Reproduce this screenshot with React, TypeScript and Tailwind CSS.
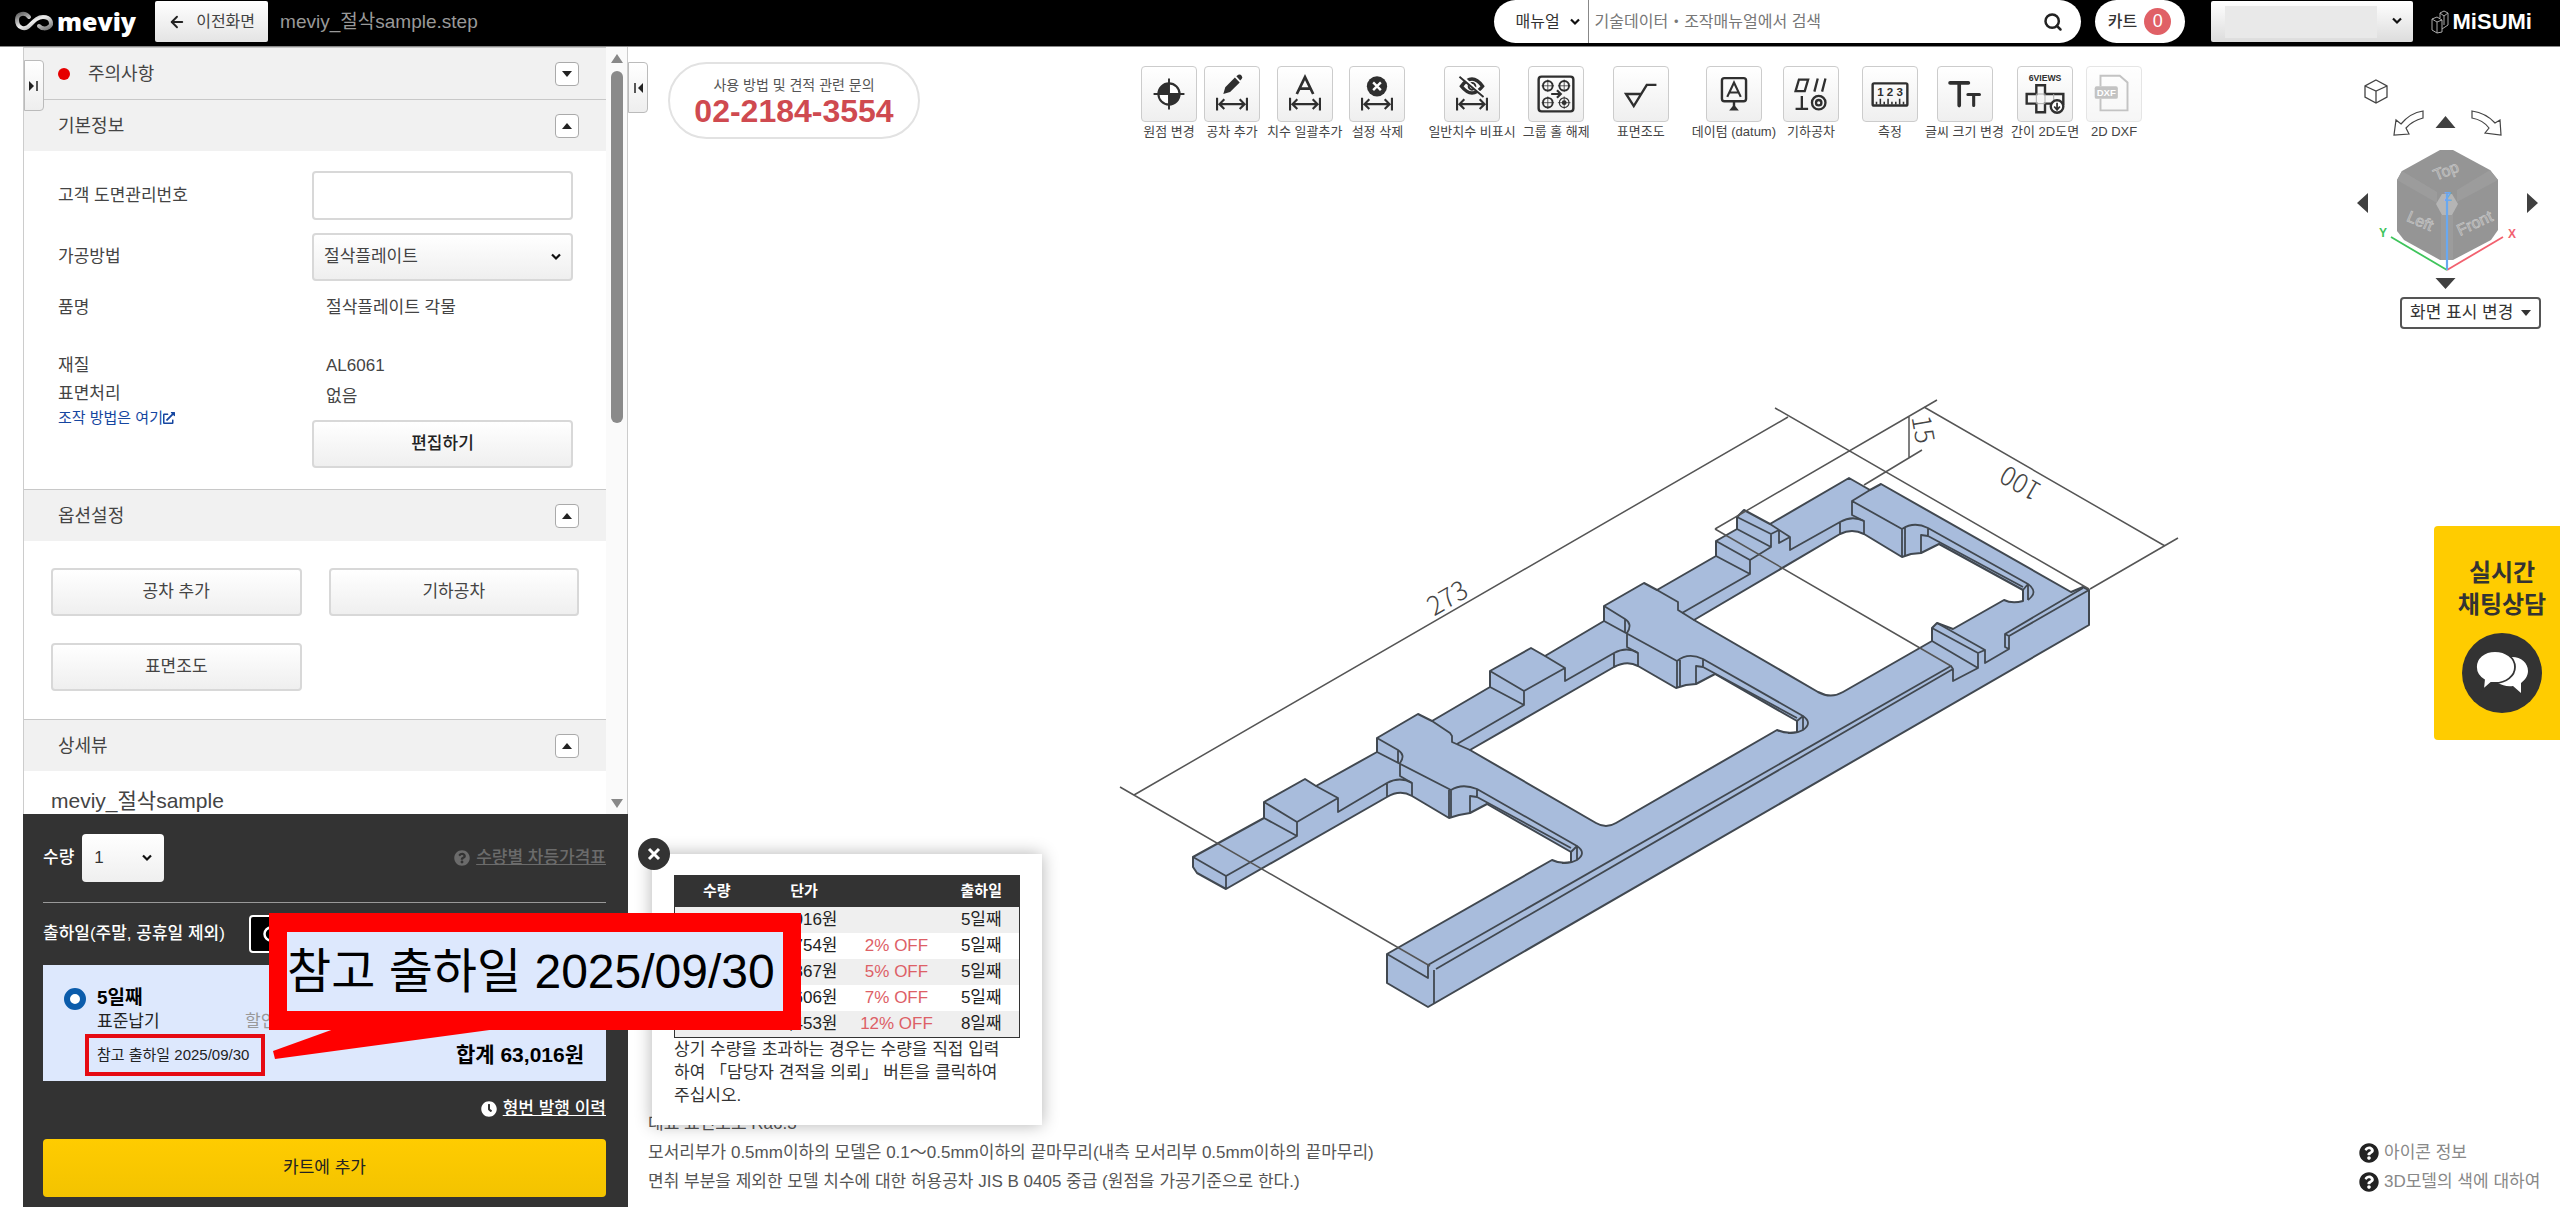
/**
 * Pantalla del visor 3D: cabecera, panel lateral de opciones y presupuesto,
 * barra de herramientas, dibujo acotado de la pieza y tabla de precios.
 */
import type { ReactNode } from "react";
import { ArrowLeft, Search } from "lucide-react";
import { FaClock, FaQuestionCircle, FaExternalLinkAlt } from "react-icons/fa";

interface PriceRow {
  price: string;
  off: string;
  ship: string;
}

interface Tool {
  label: string;
  icon: ReactNode;
  disabled?: boolean;
}

const PRICE_ROWS: PriceRow[] = [
  { price: "63,016원", off: "", ship: "5일째" },
  { price: "61,754원", off: "2% OFF", ship: "5일째" },
  { price: "59,867원", off: "5% OFF", ship: "5일째" },
  { price: "58,606원", off: "7% OFF", ship: "5일째" },
  { price: "55,453원", off: "12% OFF", ship: "8일째" },
];

const INK = "#2f2f2f";

// Flecha de cota compartida por varios iconos
const DimArrow = () => (
  <path d="M12.5 32v13M43.5 32v13M15 38.5h26M20 33.500l-5 5 5 5M36 33.500l5 5-5 5" fill="none" stroke={INK} strokeWidth="2.2" />
);

const TOOL_GROUPS: Tool[][] = [
  [
    {
      label: "원점 변경",
      icon: (
        <>
          <circle cx="28" cy="28" r="11" fill="#fff" stroke={INK} strokeWidth="2.2" />
          <path d="M28 28V17a11 11 0 0 0-11 11zM28 28v11a11 11 0 0 0 11-11z" fill={INK} />
          <path d="M28 12v32M12 28h32" stroke={INK} strokeWidth="2" />
        </>
      ),
    },
    {
      label: "공차 추가",
      icon: (
        <>
          <path d="M19 28l2-7 10-10 5 5-10 10zM32.500 9.500l2-1.500q2-1 3.500 1t0 3.500l-1.500 1.500z" fill={INK} />
          <DimArrow />
        </>
      ),
    },
    {
      label: "치수 일괄추가",
      icon: (
        <>
          <path d="M19.500 28L28 10.500 36.500 28M22.500 22.500h11" fill="none" stroke={INK} strokeWidth="2.8" />
          <DimArrow />
        </>
      ),
    },
    {
      label: "설정 삭제",
      icon: (
        <>
          <circle cx="28" cy="20" r="10.500" fill={INK} />
          <path d="M24 16l8 8M32 16l-8 8" stroke="#fff" strokeWidth="2.500" />
          <DimArrow />
        </>
      ),
    },
  ],
  [
    {
      label: "일반치수 비표시",
      icon: (
        <>
          <path d="M17 20q11-15 22 0-11 14-22 0z" fill="none" stroke={INK} strokeWidth="3.500" />
          <circle cx="28" cy="20" r="3.500" fill="none" stroke={INK} strokeWidth="2" />
          <path d="M17 9l24 22" stroke="#fff" strokeWidth="2.500" />
          <path d="M15 10l25 21" stroke={INK} strokeWidth="2" />
          <DimArrow />
        </>
      ),
    },
    {
      label: "그룹 홀 해제",
      icon: (
        <>
          <rect x="10" y="10" width="36" height="36" rx="3" fill="none" stroke={INK} strokeWidth="2.500" />
          <g fill="none" stroke={INK} strokeWidth="2">
            <circle cx="19.500" cy="19.500" r="5" />
            <circle cx="36.500" cy="19.500" r="5" />
            <circle cx="19.500" cy="37" r="5" />
            <circle cx="36.500" cy="37" r="5" strokeWidth="1.200" />
          </g>
          <path d="M19.500 13v13M13 19.500h13M36.500 13v13M30 19.500h13M19.500 30.500v13M13 37h13M36.500 30.500v13M30 37h13" stroke={INK} strokeWidth="0.800" />
          <circle cx="36.500" cy="37" r="2.500" fill={INK} />
          <path d="M23 28h9M29 24l4 4-4 4" fill="none" stroke={INK} strokeWidth="2.200" />
        </>
      ),
    },
  ],
  [
    {
      label: "표면조도",
      icon: <path d="M28 28H12.500L20.500 40.500 34 18.500h10" fill="none" stroke={INK} strokeWidth="2.500" />,
    },
  ],
  [
    {
      label: "데이텀 (datum)",
      icon: (
        <>
          <rect x="15.500" y="11.500" width="25" height="24" rx="2.500" fill="none" stroke={INK} strokeWidth="2.500" />
          <path d="M21 31l7-15 7 15M23.500 26.500h9" fill="none" stroke={INK} strokeWidth="2.200" />
          <path d="M28 36v5" stroke={INK} strokeWidth="2.500" />
          <path d="M28 39l5 6H23z" fill={INK} />
        </>
      ),
    },
    {
      label: "기하공차",
      icon: (
        <g fill="none" stroke={INK} strokeWidth="2.400">
          <path d="M12 25l3.500-12H25l-3.500 12zM31.500 25.500L35 12M39.500 25.500L43 12M12 43.500h13M18.500 30v13" />
          <circle cx="36" cy="37" r="7" />
          <circle cx="36" cy="37" r="2.800" />
        </g>
      ),
    },
  ],
  [
    {
      label: "측정",
      icon: (
        <>
          <rect x="10" y="17" width="36" height="23" rx="1.500" fill="none" stroke={INK} strokeWidth="2.500" />
          <text x="28" y="30" textAnchor="middle" fontSize="12" fontWeight="700" fill={INK}>1 2 3</text>
          <path d="M14 39v-3M18 39v-6M22 39v-3M26 39v-6M30 39v-3M34 39v-3M38 39v-6M42 39v-3" stroke={INK} strokeWidth="1.600" />
        </>
      ),
    },
    {
      label: "글씨 크기 변경",
      icon: (
        <g fill="none" stroke={INK} strokeLinecap="round">
          <path d="M12.500 16.500h19M22 17v23" strokeWidth="3.800" />
          <path d="M31 28.500h12M37 29v11" strokeWidth="3.200" />
        </g>
      ),
    },
    {
      label: "간이 2D도면",
      icon: (
        <>
          <text x="28" y="15" textAnchor="middle" fontSize="9" fontWeight="700" fill={INK}>6VIEWS</text>
          <path d="M19 28v-9h9v9h19v10H28v9h-9v-9H9V28z" fill="none" stroke={INK} strokeWidth="2.500" />
          <path d="M19 28h9v10h-9zM37 28v8" fill="none" stroke="#aaa" strokeWidth="1" />
          <circle cx="40.500" cy="41" r="6.500" fill="#fff" stroke={INK} strokeWidth="2.500" />
          <path d="M40.500 37v6M37.500 41l3 3.500 3-3.500" fill="none" stroke={INK} strokeWidth="1.800" />
        </>
      ),
    },
    {
      label: "2D DXF",
      disabled: true,
      icon: (
        <>
          <path d="M14 20V9h20l8 7v29H14V33" fill="none" stroke="#888" strokeWidth="2" />
          <rect x="8" y="20" width="24" height="13" rx="2" fill="#888" />
          <text x="20" y="30.500" textAnchor="middle" fontSize="10" fontWeight="700" fill="#fff">DXF</text>
        </>
      ),
    },
  ],
];

const Chevron = ({ className }: { className: string }) => (
  <svg viewBox="0 0 10 8" className={className} aria-hidden="true">
    <path d="M1 1.500l4 4 4-4" fill="none" stroke="#111" strokeWidth="2.200" />
  </svg>
);

const OutlineButton = ({ children, className = "" }: { children: ReactNode; className?: string }) => (
  <button
    type="button"
    className={`h-12 rounded-sm border-2 border-[#d8d8d8] bg-gradient-to-b from-white to-[#efefef] text-[17px] leading-6 ${className}`}
  >
    {children}
  </button>
);

const SectionHeader = ({ title, open = true, alert = false }: { title: string; open?: boolean; alert?: boolean }) => (
  <div className="flex h-[52px] items-center border-t border-[#c8c8c8] bg-[#f1f1f1] pr-[27px] pl-[34px]">
    {alert ? <span className="mr-[18px] h-3 w-3 rounded-full bg-[#e60000]" /> : null}
    <h2 className="flex-1 text-[18px] leading-6 text-[#444]">{title}</h2>
    <button
      type="button"
      aria-label={title}
      className="flex h-6 w-6 items-center justify-center rounded-sm border border-[#aaa] bg-white"
    >
      <svg viewBox="0 0 10 6" className="h-1.5 w-2.5">
        <path d={open ? "M5 0l5 6H0z" : "M0 0h10L5 6z"} fill="#222" />
      </svg>
    </button>
  </div>
);

function Header() {
  return (
    <header className="flex h-[47px] shrink-0 items-start border-b border-[#888] bg-black pr-7 pl-[14px]">
      <a href="#home" className="flex h-[43px] items-center text-white">
        <svg viewBox="14 10 42 24" className="h-6 w-[42px]" fill="none" strokeLinecap="round">
          <defs>
            <linearGradient id="metal" x1="0" y1="0" x2="1" y2="1">
              <stop offset="0" stopColor="#666" />
              <stop offset="0.500" stopColor="#eee" />
              <stop offset="1" stopColor="#777" />
            </linearGradient>
          </defs>
          <path d="M29 17C25 12 17 13 17 20c0 8 8 11 13 5 5-5 8-8 13-8 8 0 10 7 6 10-3 2-7 2-10-1" stroke="url(#metal)" strokeWidth="4" />
        </svg>
        <span className="ml-px font-['Open_Sans'] text-[25px] leading-[43px] font-extrabold">meviy</span>
      </a>
      <button
        type="button"
        className="mt-px ml-[19px] flex h-[41px] w-[113px] items-center justify-center gap-2.5 rounded-xs bg-gradient-to-b from-white to-[#e4e4e4] text-[16px] text-[#444]"
      >
        <ArrowLeft className="h-[18px] w-[18px]" strokeWidth={2.5} color="#222" />
        이전화면
      </button>
      <h1 className="ml-3 text-[19px] leading-[43px] text-[#999]">meviy_절삭sample.step</h1>

      <form className="ml-auto flex h-[43px] w-[587px] items-center rounded-full bg-white pr-[18px] pl-[22px]">
        <label className="relative flex h-full items-center border-r border-[#888]">
          <select aria-label="검색 대상" className="h-full w-[72px] appearance-none text-[16px] text-[#333]">
            <option>매뉴얼</option>
          </select>
          <Chevron className="pointer-events-none absolute right-2 h-2 w-2.5" />
        </label>
        <input
          type="search"
          aria-label="검색"
          placeholder="기술데이터・조작매뉴얼에서 검색"
          className="h-full flex-1 px-1.5 text-[16px] placeholder:text-[#777]"
        />
        <button type="button" aria-label="검색">
          <Search className="h-5 w-5" strokeWidth={3} color="#222" />
        </button>
      </form>
      <a href="#cart" className="ml-3.5 flex h-[43px] w-[90px] items-center justify-center gap-[7px] rounded-full bg-white text-[16px] font-medium text-[#333]">
        카트
        <span className="flex h-[27px] w-[27px] items-center justify-center rounded-full bg-[#e06066] text-[18px] text-white">0</span>
      </a>
      <div className="relative mt-px ml-[26px] h-[41px] w-[202px]">
        <select aria-label="계정" className="h-full w-full appearance-none rounded-xs bg-gradient-to-b from-white to-[#dcdcdc]" />
        <span className="pointer-events-none absolute top-[5px] left-3.5 h-8 w-[152px] bg-[#e9e9e9]" />
        <Chevron className="pointer-events-none absolute top-4 right-[11px] h-2 w-2.5" />
      </div>
      <a href="#misumi" className="ml-[18px] flex h-[43px] items-center gap-1 text-white">
        <svg viewBox="0 0 18 24" className="h-6 w-[18px]" fill="none" stroke="#aaa" strokeWidth="1">
          <path d="M1 9l5-2 5 3v12l-5 1-5-3zM1 9l5 3 5-2M6 12v11M9 3l4-2 4 2v12l-6 4M9 3l4 3 4-3M13 6v9M9 3v5" />
        </svg>
        <span className="font-['Liberation_Sans_Narrow','Liberation_Sans'] text-[22px] leading-[43px] font-bold">MiSUMi</span>
      </a>
    </header>
  );
}

function Sidebar() {
  return (
    <aside className="relative z-10 ml-[23px] flex w-[605px] shrink-0 flex-col border-x border-[#ccc]">
      <button
        type="button"
        aria-label="패널 접기"
        className="absolute top-[13px] left-0 flex h-[51px] w-5 items-center justify-center rounded-r border border-[#bbb] bg-gradient-to-b from-white to-[#eee]"
      >
        <svg viewBox="0 0 10 10" className="h-2.5 w-2.5">
          <path d="M0 0l5 5-5 5z" fill="#222" />
          <path d="M8 0v10" stroke="#222" strokeWidth="1.500" />
        </svg>
      </button>

      <div className="flex min-h-0 flex-1">
        {/* Secciones del modelo */}
        <div className="min-w-0 flex-1 overflow-hidden text-[17px] leading-6 text-[#444]">
          <SectionHeader title="주의사항" open={false} alert />
          <SectionHeader title="기본정보" />
          <div className="grid h-[338px] grid-cols-[254px_261px] content-start pt-5 pl-[34px]">
            <label htmlFor="drawing-no" className="flex h-[50px] items-center">고객 도면관리번호</label>
            <input id="drawing-no" type="text" className="h-[49px] rounded-sm border-2 border-[#d8d8d8] px-3" />
            <label htmlFor="process" className="mt-3 flex h-12 items-center">가공방법</label>
            <div className="relative mt-3 flex items-center">
              <select id="process" className="h-12 w-full appearance-none rounded-sm border-2 border-[#d8d8d8] bg-gradient-to-b from-white to-[#efefef] px-2.5">
                <option>절삭플레이트</option>
              </select>
              <Chevron className="pointer-events-none absolute right-3 h-2 w-2.5" />
            </div>
            <span className="mt-[15px]">품명</span>
            <span className="mt-[15px] pl-3.5">절삭플레이트 각물</span>
            <span className="mt-[34px]">재질</span>
            <span className="mt-[34px] pl-3.5">AL6061</span>
            <div className="mt-1">
              <p>표면처리</p>
              <a href="#help" className="flex items-center text-[15px] leading-6 text-[#1546a0]">
                조작 방법은 여기<FaExternalLinkAlt className="h-3 w-3" />
              </a>
            </div>
            <div className="mt-[7px] pl-3.5">없음</div>
            <OutlineButton className="col-start-2 -mt-2.5 font-medium text-[#222]">편집하기</OutlineButton>
          </div>
          <SectionHeader title="옵션설정" />
          <div className="grid h-[178px] grid-cols-2 content-start gap-x-[27px] gap-y-[27px] pt-[27px] pr-[27px] pl-[27px]">
            <OutlineButton>공차 추가</OutlineButton>
            <OutlineButton>기하공차</OutlineButton>
            <OutlineButton>표면조도</OutlineButton>
          </div>
          <SectionHeader title="상세뷰" />
          <p className="pt-4 pl-[27px] text-[21px] leading-7">meviy_절삭sample</p>
        </div>

        {/* Barra de desplazamiento */}
        <div className="flex w-[21px] flex-col items-center bg-[#fafafa] pt-[7px] pb-1.5">
          <svg viewBox="0 0 12 9" className="h-[9px] w-3"><path d="M6 0l6 9H0z" fill="#888" /></svg>
          <div className="mt-2 h-[352px] w-3 rounded-full bg-[#8a8a8a]" />
          <svg viewBox="0 0 12 9" className="mt-auto h-[9px] w-3"><path d="M0 0h12L6 9z" fill="#888" /></svg>
        </div>
      </div>

      <QuotePanel />
    </aside>
  );
}

function QuotePanel() {
  return (
    <div className="relative -mx-px flex h-[393px] shrink-0 flex-col bg-[#333] pr-[22px] pl-5 text-[17px] leading-6 text-white">
      <div className="flex h-[89px] items-center border-b border-[#999]">
        <label htmlFor="qty" className="font-medium">수량</label>
        <div className="relative ml-2 flex items-center">
          <select id="qty" className="h-12 w-[82px] appearance-none rounded-sm bg-gradient-to-b from-white to-[#efefef] px-3 text-[#333]">
            <option>1</option>
          </select>
          <Chevron className="pointer-events-none absolute right-3 h-2 w-2.5" />
        </div>
        <a href="#prices" className="ml-auto flex items-center gap-1.5 font-medium text-[#6b6b6b]">
          <FaQuestionCircle className="h-4 w-4" />
          <span className="underline">수량별 차등가격표</span>
        </a>
      </div>
      <div className="mt-3 flex items-center">
        <span className="font-medium">출하일(주말, 공휴일 제외)</span>
        <button type="button" aria-label="납기 안내" className="ml-6 flex h-[38px] w-24 items-center rounded border-2 border-white bg-black pl-3">
          <svg viewBox="0 0 16 16" className="h-4 w-4"><circle cx="8" cy="8" r="6.500" fill="none" stroke="#fff" strokeWidth="2.500" /></svg>
        </button>
      </div>

      {/* Plazo de entrega elegido */}
      <label className="mt-3 flex h-[116px] shrink-0 bg-[#dde8fd] pt-[21px] pr-[22px] pl-[21px] text-black">
        <input type="radio" name="lead" defaultChecked className="mt-0.5 h-[22px] w-[22px] shrink-0 appearance-none rounded-full border-[6px] border-[#0b5cab] bg-white" />
        <span className="ml-[11px] flex flex-1 flex-col">
          <span className="text-[19px] leading-6 font-bold">5일째</span>
          <span className="flex">
            <span className="w-[148px] text-[#222]">표준납기</span>
            <span className="text-[#999]">할인</span>
          </span>
          <span className="flex items-center justify-between">
            <span className="-ml-3 flex h-[42px] w-[180px] items-center border-4 border-[#e60a12] pl-2 text-[15px] whitespace-nowrap text-[#222]">
              참고 출하일 2025/09/30
            </span>
            <span className="text-[21px] font-bold">합계 63,016원</span>
          </span>
        </span>
      </label>
      <a href="#history" className="mt-4 flex items-center gap-1.5 self-end font-medium">
        <FaClock className="h-4 w-4" />
        <span className="underline">형번 발행 이력</span>
      </a>
      <button type="button" className="mt-[18px] h-[58px] shrink-0 rounded-sm bg-gradient-to-b from-[#ffcc00] to-[#f3c300] text-[17px] text-[#222]">
        카트에 추가
      </button>

      {/* Globo que amplía la fecha de envío */}
      <div className="absolute top-[99px] left-[246px] z-30">
        <div className="flex h-[117px] w-[532px] items-center border-x-[18px] border-y-[19px] border-[#ff0000] bg-[#dde8fd] text-[48px] leading-[79px] whitespace-nowrap text-black">
          참고 출하일 2025/09/30
        </div>
        <svg viewBox="0 0 240 30" className="-mt-px ml-1 block h-[30px] w-60">
          <path d="M61 0L0 22l2 8L224 0z" fill="#ff0000" />
        </svg>
      </div>
    </div>
  );
}

function Toolbar() {
  return (
    <nav className="ml-[221px] flex gap-[23px] pt-[19px]">
      {TOOL_GROUPS.map((group) => (
        <div key={group[0].label} className="flex gap-[7px]">
          {group.map((tool) => (
            <button
              key={tool.label}
              type="button"
              disabled={tool.disabled}
              className="flex min-w-14 flex-col items-center text-[13px] leading-5 whitespace-nowrap text-[#444]"
            >
              <span className={`h-14 w-14 rounded border border-[#ccc] bg-gradient-to-b from-white to-[#efefef] ${tool.disabled ? "opacity-50" : ""}`}>
                <svg viewBox="0 0 56 56" className="h-full w-full">{tool.icon}</svg>
              </span>
              {tool.label}
            </button>
          ))}
        </div>
      ))}
    </nav>
  );
}

// Pieza en isométrico: silueta con huecos, aristas y cotas
function PartDrawing() {
  return (
    <svg viewBox="628 142 1727 967" className="min-h-0 w-full flex-1" strokeLinejoin="round">
      <path
        fillRule="evenodd"
        fill="#a8bcdc"
        stroke="#414850"
        strokeWidth="2"
        d="M1193 857L1264 818V802L1305 779L1316 786L1377 752V738L1418 714L1432 721L1490 687V671L1531 648L1545 656L1604 621V606L1644 583L1657 590L1716 556V541L1737 529V517L1744 510L1770 524L1849 478L1870 490L1881 484L2071 592L2083 587L2089 590V625L1428 1007L1387 983V954L1552 860Q1560 864 1571 862V852L1487 804L1470 813L1459 815L1449 818L1412 796Q1400 789 1387 797L1226 889L1197 873L1193 867Z
           M1470 750L1596 823Q1606 829 1616 823L1777 730Q1786 734 1797 732V721L1715 674L1696 684L1686 685L1676 688L1638 666Q1627 660 1614 667Z
           M1694 620L1818 692Q1831 699 1843 692L1932 641V628L1937 623L1953 629L2004 600Q2012 604 2023 601V590L1939 544L1921 553L1911 554L1902 557L1864 534Q1852 528 1840 534Z"
      />
      <g fill="none" stroke="#414850" strokeWidth="1.800">
        {/* Brazo izquierdo y tacos */}
        <path d="M1193 857L1226 876V889M1226 876L1297 836V822L1338 798V812L1387 783Q1400 776 1412 783V796M1387 783V797M1264 802L1297 822M1264 818L1297 836M1316 786L1338 798" />
        <path d="M1490 671L1524 691V705L1457 744M1490 687L1524 705M1524 691L1565 668V681L1614 653Q1627 646 1638 653V666M1614 653V667M1545 656L1565 668" />
        <path d="M1716 541L1750 560V574L1682 613M1716 556L1750 574M1750 560L1771 547V534L1779 530V543L1790 537V550L1840 522Q1852 515 1864 521V534M1840 522V534M1737 517L1771 534M1737 529L1771 547M1770 524L1790 537" />
        {/* Travesaños */}
        <path d="M1377 738L1398 750Q1406 755 1400 763V776L1412 783M1398 750V762M1377 752L1451 790V817M1449 790V818M1432 721L1450 733L1452 736V742L1470 750M1451 790Q1462 783 1477 789L1577 846Q1587 853 1577 860Q1570 864 1562 863M1470 813V796L1477 797V789M1477 797L1571 848M1571 862V852L1577 846V860" />
        <path d="M1604 606L1625 619Q1633 624 1627 633V647L1638 653M1625 619V632M1604 621L1677 661V688M1680 660V686M1657 590L1678 602V610L1694 620M1677 661Q1688 652 1703 659L1803 716Q1813 723 1803 730Q1796 734 1788 733M1696 684V666L1703 667V659M1703 667L1797 718M1797 732V721L1803 716V730" />
        <path d="M1870 490L1852 501V515L1864 521M1852 501L1902 529V557M1905 528V556M1902 529Q1914 521 1928 528L2028 584Q2039 592 2028 600M1921 553V535L1928 536V528M1928 536L2023 587M2023 601V590L2028 584V600" />
        {/* Larguero derecho */}
        <path d="M1387 954L1428 978V965L1951 666L1953 669V681L1978 668V653L1985 650V663L2009 649V636L2089 590M1434 970V1004M1436 969L1953 669M1932 628L1978 653M1932 641L1978 668M1937 623L1985 650M2009 649L2005 647V634L2083 588M2005 634L2009 636" />
      </g>
      {/* Líneas de cota */}
      <path
        fill="none"
        stroke="#555"
        strokeWidth="1.500"
        d="M1134 795L1788 417M1120 787L1430 966M1775 408L2089 589M1715 529L1937 400M1715 529L1951 666M1924 407L2165 546M2090 589L2178 538M1864 485L1922 450M1909 417V458"
      />
      <g fill="#444" fontSize="26" fontWeight="300" textAnchor="middle" className="font-['Noto_Sans_CJK_KR']">
        <text transform="translate(1452 606) rotate(-30)">273</text>
        <text transform="translate(1914 431) rotate(80)">15</text>
        <text transform="translate(2025 475) rotate(210)">100</text>
      </g>
    </svg>
  );
}

function PricePopup() {
  return (
    <div className="absolute bottom-[82px] left-6 w-[390px] bg-white px-[22px] pt-[21px] pb-[18px] shadow-[0_0_16px_rgba(0,0,0,0.300)]">
      <button
        type="button"
        aria-label="닫기"
        className="absolute -top-4 -left-3.5 flex h-8 w-8 items-center justify-center rounded-full bg-[#333]"
      >
        <svg viewBox="0 0 14 14" className="h-3.5 w-3.5"><path d="M2 2l10 10M12 2L2 12" stroke="#fff" strokeWidth="3" /></svg>
      </button>
      <table className="w-full table-fixed border border-[#333] text-center text-[17px] leading-[26px] text-[#222]">
        <thead className="h-8 bg-[#333] text-[15px] text-white">
          <tr>
            <th className="w-[84px]">수량</th>
            <th className="w-[91px]">단가</th>
            <th className="w-[94px]" aria-label="할인율" />
            <th>출하일</th>
          </tr>
        </thead>
        <tbody>
          {PRICE_ROWS.map((row) => (
            <tr key={row.price} className="odd:bg-[#efefef]">
              <td />
              <td className="pr-3 text-right">{row.price}</td>
              <td className="whitespace-nowrap text-[#dd6066]">{row.off}</td>
              <td>{row.ship}</td>
            </tr>
          ))}
        </tbody>
      </table>
      <p className="text-[17px] leading-[23px] text-[#333]">
        상기 수량을 초과하는 경우는 수량을 직접 입력
        <br />
        하여 「담당자 견적을 의뢰」 버튼을 클릭하여
        <br />
        주십시오.
      </p>
    </div>
  );
}

function ViewCube() {
  return (
    <svg viewBox="36 18 185 215" className="ml-[1px] h-[215px] w-[185px]">
      <path d="M56 20l11 6v11l-11 6-11-6V26zM45 26l11 5 11-5M56 31v12" fill="none" stroke="#444" strokeWidth="1.300" />
      <path d="M103 51v7q-11 3-17 10l3 6-15 1 2-15 5 4q9-11 22-13zM152 51v7q11 2 17 10l-4 5 16 2-1-15-5 3q-9-10-23-12z" fill="#fff" stroke="#444" strokeWidth="1.200" />
      <path d="M125.500 56l10 12h-20zM125.500 229l10-11h-20zM37 143l11-10v20zM218 143l-11-10v20z" fill="#404040" />
      <path d="M120 90h13l37 20 8 10v50l-7 10-38 20h-13l-36-20-7-9v-51l5-9z" fill="#959595" />
      <path d="M82 111l35 21v11l-40-23zM170 110l-33 20v12l41-22zM121 155h12v45h-12z" fill="#9c9c9c" />
      <path d="M122 134h10l6 10-6 11h-10l-6-11z" fill="#b5b5b5" />
      <g fill="#a0a0a0" stroke="#c4c4c4" strokeWidth="0.700" fontSize="16" textAnchor="middle">
        <text transform="translate(128 116) rotate(-22)">Top</text>
        <text transform="translate(98 166) rotate(24)">Left</text>
        <text transform="translate(157 168) rotate(-25)">Front</text>
      </g>
      <g fill="none" strokeWidth="1.800">
        <path d="M71 177l56 33" stroke="#3fc45c" />
        <path d="M183 177l-56 33" stroke="#f2616f" />
        <path d="M127 210v-76" stroke="#69a8f0" strokeWidth="2.200" />
      </g>
      <g fontSize="12" fontWeight="700" textAnchor="middle">
        <text x="63" y="177" fill="#3fc45c">Y</text>
        <text x="192" y="178" fill="#f2616f">X</text>
        <text x="128" y="141" fill="#69a8f0">Z</text>
      </g>
    </svg>
  );
}

function ViewControls() {
  return (
    <div className="flex w-[205px] shrink-0 flex-col pt-[31px]">
      <ViewCube />
      <button
        type="button"
        className="mt-1 mr-[19px] flex h-8 w-[141px] items-center justify-between self-end rounded border-2 border-[#555] bg-white px-2 text-[17px] whitespace-nowrap text-[#333]"
      >
        화면 표시 변경
        <svg viewBox="0 0 10 6" className="h-1.5 w-2.5"><path d="M0 0h10L5 6z" fill="#333" /></svg>
      </button>
      <button type="button" className="mt-[197px] flex h-[214px] w-[126px] flex-col items-center self-end rounded-l bg-[#ffcc00] pt-[31px] pl-2.5 text-[24px] leading-8 font-bold text-[#333]">
        <span>실시간</span>
        <span>채팅상담</span>
        <svg viewBox="0 0 80 80" className="mt-3 h-20 w-20">
          <circle cx="40" cy="40" r="40" fill="#333" />
          <path d="M48 24c10-1 18 5 18 14 0 5-3 9-7 12v10l-8-7c-6 1-11-1-15-3z" fill="#fff" />
          <path d="M33 18c11 0 20 7 20 16s-9 16-20 16l-4 0-8 7 1-10c-5-3-8-8-8-13 0-9 8-16 19-16z" fill="#fff" stroke="#333" strokeWidth="1.800" />
        </svg>
      </button>
      <ul className="mt-auto pb-[11px] text-[17px] leading-[29px] whitespace-nowrap text-[#888]">
        {["아이콘 정보", "3D모델의 색에 대하여"].map((item) => (
          <li key={item}>
            <a href="#info" className="ml-1 flex items-center gap-[5px]">
              <FaQuestionCircle className="h-5 w-5" color="#222" />
              {item}
            </a>
          </li>
        ))}
      </ul>
    </div>
  );
}

export default function App() {
  return (
    <div lang="ko" className="flex h-screen flex-col overflow-hidden bg-white font-['Liberation_Sans','Noto_Sans_CJK_KR',sans-serif]">
      <Header />
      <div className="flex min-h-0 flex-1">
        <Sidebar />
        <main className="relative flex min-w-0 flex-1">
          <div className="flex min-w-0 flex-1 flex-col">
            {/* Teléfono y herramientas */}
            <div className="flex h-[95px] shrink-0 items-start">
              <button
                type="button"
                aria-label="패널 닫기"
                className="mt-[15px] flex h-[51px] w-5 items-center justify-center rounded-r border border-[#bbb] bg-gradient-to-b from-white to-[#eee]"
              >
                <svg viewBox="0 0 10 10" className="h-2.5 w-2.5">
                  <path d="M10 0L5 5l5 5z" fill="#222" />
                  <path d="M2 0v10" stroke="#222" strokeWidth="1.500" />
                </svg>
              </button>
              <div className="mt-[15px] ml-5 flex h-[77px] w-[252px] flex-col items-center justify-center rounded-full border-2 border-[#e2e2e2]">
                <span className="text-[14px] leading-5 text-[#555]">사용 방법 및 견적 관련 문의</span>
                <strong className="text-[32px] leading-8 text-[#cf4a50]">02-2184-3554</strong>
              </div>
              <Toolbar />
            </div>
            <PartDrawing />
            <div className="shrink-0 pb-[11px] pl-5 text-[17px] leading-[29px] text-[#555]">
              <p>대표 표면조도 Ra6.3</p>
              <p>모서리부가 0.5mm이하의 모델은 0.1～0.5mm이하의 끝마무리(내측 모서리부 0.5mm이하의 끝마무리)</p>
              <p>면취 부분을 제외한 모델 치수에 대한 허용공차 JIS B 0405 중급 (원점을 가공기준으로 한다.)</p>
            </div>
          </div>
          <ViewControls />
          <PricePopup />
        </main>
      </div>
    </div>
  );
}
